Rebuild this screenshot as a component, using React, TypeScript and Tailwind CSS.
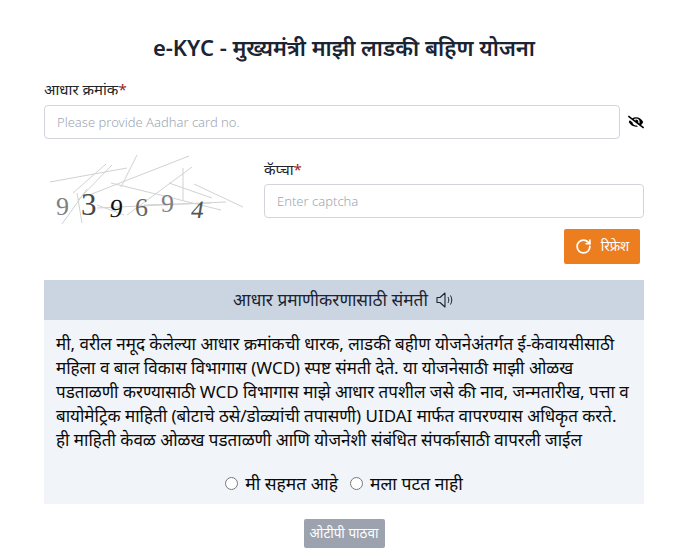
import { RotateCw } from 'lucide-react';
import { FaEyeSlash } from 'react-icons/fa';

const NOISE = [
  [50, 182, 127, 168],
  [73, 193, 106, 164],
  [78, 200, 112, 165],
  [62, 224, 87, 189],
  [77, 193, 82, 223],
  [84, 197, 189, 156],
  [121, 187, 137, 155],
  [111, 183, 221, 210],
  [169, 183, 212, 198],
  [194, 184, 243, 207],
  [183, 168, 183, 200],
  [127, 215, 192, 167],
  [97, 208, 226, 202],
  [97, 205, 124, 215],
  [144, 205, 211, 203],
];

const DIGITS = [
  { c: '9', x: 56, y: 215, size: 26, fill: '#808080', skew: 0 },
  { c: '3', x: 81, y: 215, size: 31, fill: '#484848', skew: 0 },
  { c: '9', x: 109, y: 217, size: 26, fill: '#111111', skew: -6 },
  { c: '6', x: 135, y: 216, size: 26, fill: '#666666', skew: 0 },
  { c: '9', x: 161, y: 212, size: 26, fill: '#808080', skew: 0 },
  { c: '4', x: 190, y: 218, size: 25, fill: '#555555', skew: -10 },
];

function Captcha() {
  return (
    <svg width="200" height="74" viewBox="44 153 200 74" className="shrink-0">
      {NOISE.map((l, i) => (
        <line key={i} x1={l[0]} y1={l[1]} x2={l[2]} y2={l[3]} stroke="#d2d2d2" strokeWidth="1" />
      ))}
      {DIGITS.map((d, i) => (
        <text
          key={i}
          transform={`translate(${d.x} ${d.y}) skewX(${d.skew})`}
          fontSize={d.size}
          fontFamily="'Liberation Serif', serif"
          fill={d.fill}
        >
          {d.c}
        </text>
      ))}
    </svg>
  );
}

// outline speaker with two small waves
function SpeakerIcon() {
  return (
    <svg width="19" height="16" viewBox="0 0 19 16" fill="none" stroke="currentColor" className="ml-[8px]">
      <path d="M1 5.5H4L9 1V15L4 10.5H1Z" strokeWidth="1.1" strokeLinejoin="round" />
      <path d="M12 5C13 7 13 9 12 11" strokeWidth="1" />
      <path d="M14.5 3.5C16.2 6.5 16.2 9.5 14.5 12.5" strokeWidth="1" />
    </svg>
  );
}

export default function App() {
  return (
    <div className="w-[690px] h-[555px] bg-white overflow-hidden font-['Noto_Sans','Open_Sans',sans-serif] text-[#212529]">
      <div className="w-[600px] ml-[44px] pt-[32px]">
        <h1 className="text-center text-[22px] leading-[30px] font-semibold text-[#1a2433]">
          e-KYC - मुख्यमंत्री माझी लाडकी बहिण योजना
        </h1>

        <label className="block mt-[17px] text-[15px] leading-[20px] text-[#212529]">
          आधार क्रमांक<span className="text-[#991b1b]">*</span>
        </label>
        <div className="flex items-center mt-[6px]">
          <input
            placeholder="Please provide Aadhar card no."
            className="w-[576px] h-[34px] border border-[#d1d5db] rounded px-3 text-[13px] font-light placeholder:text-[#a0a7b2] bg-white"
          />
          <span className="ml-[8px] text-black">
            <FaEyeSlash size={16} />
          </span>
        </div>

        <div className="flex mt-[14px]">
          <Captcha />
          <div className="ml-[20px] flex-1 pt-[6px]">
            <label className="block text-[15px] leading-[20px]">
              कॅप्चा<span className="text-[#991b1b]">*</span>
            </label>
            <input
              placeholder="Enter captcha"
              className="w-full h-[34px] mt-[5px] border border-[#d1d5db] rounded px-3 text-[13px] font-light placeholder:text-[#a0a7b2] bg-white"
            />
          </div>
        </div>

        <div className="flex justify-end mt-[2px] pr-[4px]">
          <button className="w-[76px] h-[35px] bg-[#ec7e20] text-white rounded-[2px] flex items-center justify-center gap-[9px] text-[13.5px]">
            <RotateCw size={17} strokeWidth={2.5} />
            रिफ्रेश
          </button>
        </div>

        <div className="mt-[16px] h-[40px] bg-[#cbd5e1] flex items-center justify-center text-[17.3px] text-[#1a2433]">
          आधार प्रमाणीकरणासाठी संमती
          <SpeakerIcon />
        </div>
        <div className="h-[184px] bg-[#f1f5f9] px-3 pt-[12px] text-[#0a0a0a]">
          <p className="text-[17px] leading-[24px] whitespace-nowrap">
            मी, वरील नमूद केलेल्या आधार क्रमांकची धारक, लाडकी बहीण योजनेअंतर्गत ई-केवायसीसाठी
            <br />
            महिला व बाल विकास विभागास (WCD) स्पष्ट संमती देते. या योजनेसाठी माझी ओळख
            <br />
            पडताळणी करण्यासाठी WCD विभागास माझे आधार तपशील जसे की नाव, जन्मतारीख, पत्ता व
            <br />
            बायोमेट्रिक माहिती (बोटाचे ठसे/डोळ्यांची तपासणी) UIDAI मार्फत वापरण्यास अधिकृत करते.
            <br />
            ही माहिती केवळ ओळख पडताळणी आणि योजनेशी संबंधित संपर्कासाठी वापरली जाईल
          </p>
          <div className="flex items-center justify-center mt-[19px] text-[17.5px] leading-[24px]">
            <input type="radio" name="consent" className="w-[13px] h-[13px] mr-[7px]" />
            <span>मी सहमत आहे</span>
            <input type="radio" name="consent" className="w-[13px] h-[13px] ml-[12px] mr-[7px]" />
            <span>मला पटत नाही</span>
          </div>
        </div>

        <div className="flex justify-center mt-[15px]">
          <button className="w-[81px] h-[29px] bg-[#9ca3af] text-white rounded-[2px] text-[13.5px]">
            ओटीपी पाठवा
          </button>
        </div>
      </div>
    </div>
  );
}
